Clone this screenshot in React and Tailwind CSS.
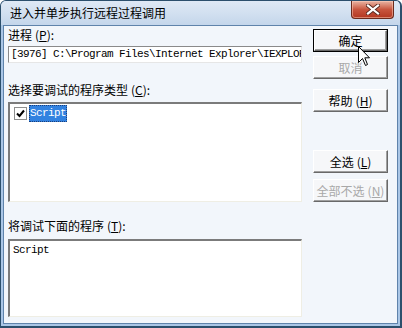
import clsx from "clsx"

const cjk = { fontFamily: '"Noto Sans CJK SC", "Liberation Sans", sans-serif' }
const mono = { fontFamily: '"Liberation Mono", "Noto Sans CJK SC", monospace' }

function Key({ k }) {
    return <span className="ml-[3px]">(<u>{k}</u>)</span>
}

function Btn({ children, primary, disabled, className }) {
    return (
        <div className={clsx("w-[75px] h-[23px]", primary && "border border-black", className)}>
            <div
                className={clsx(
                    "h-full flex items-center justify-center text-[12px] leading-none bg-[#f6f7f9]",
                    "border-t border-l border-t-white border-l-white border-r border-b border-r-[#696969] border-b-[#696969]",
                    "shadow-[inset_-1px_-1px_0_#a0a0a0]",
                    disabled ? "text-[#a8a8a8]" : "text-black"
                )}
            >
                {children}
            </div>
        </div>
    )
}

function CloseButton() {
    return (
        <div className="w-[43px] h-[18px] rounded-b-[4px] border border-t-0 border-[#6b2a1c] bg-gradient-to-b from-[#e8b4a4] via-[#c8553e] to-[#b3361f] flex items-center justify-center shadow-[inset_0_0_0_1px_rgba(255,210,190,0.5)]">
            <svg width="14" height="11" viewBox="0 0 14 11">
                <path d="M2 1.5 L12 9.5 M12 1.5 L2 9.5" stroke="#5a2a20" strokeWidth="4" strokeLinecap="square" />
                <path d="M2 1.5 L12 9.5 M12 1.5 L2 9.5" stroke="#ffffff" strokeWidth="2.2" strokeLinecap="square" />
            </svg>
        </div>
    )
}

function Cursor() {
    return (
        <svg className="absolute left-[357px] top-[45px]" width="13" height="21" viewBox="0 0 13 21">
            <path d="M0.5 0.5 L0.5 16.5 L4.5 12.5 L7.5 19.5 L9.5 18.5 L6.8 11.8 L11.5 11.8 Z" fill="#ffffff" stroke="#000000" strokeWidth="1" strokeLinejoin="miter" />
        </svg>
    )
}

export default function App() {
    return (
        <div className="w-[402px] h-[328px] relative flex flex-col bg-[#aac6e6] border border-[#2c4f6c] border-r-2 border-b-2 rounded-t-[6px] overflow-hidden" style={cjk}>
            {/* title bar */}
            <div className="h-[24px] flex justify-between pl-[9px] pr-[6px] bg-gradient-to-b from-[#dfe9f5] via-[#d2e0f0] to-[#c4d6eb]">
                <span className="mt-[5px] text-[12px] leading-[14px] text-black">进入并单步执行远程过程调用</span>
                <CloseButton />
            </div>

            {/* client area */}
            <div className="flex-1 mx-[2px] mb-[2px] border border-[#5f83ab] bg-[#f2f6fb] flex pl-[4px]">
                <div className="w-[294px] flex flex-col text-[12px] leading-[14px] text-black">
                    <div className="mt-[2px] h-[14px]">进程<Key k="P" />:</div>
                    <div className="mt-[4px] h-[17px] bg-white border border-[#8a8a8a] border-r-[#e6e6e6] border-b-[#e6e6e6] overflow-hidden whitespace-nowrap pl-[2px] text-[11px] leading-[15px] tracking-[-0.6px]" style={mono}>
                        [3976] C:\Program Files\Internet Explorer\IEXPLORE.EXE
                    </div>
                    <div className="mt-[20px] h-[14px]">选择要调试的程序类型<Key k="C" />:</div>
                    <div className="mt-[5px] h-[100px] bg-white border-t-2 border-l-2 border-[#7b7b7b] border-r border-b border-r-[#efeee4] border-b-[#efeee4] pl-[4px] pt-[1px]">
                        <div className="flex items-center gap-[2px]">
                            <div className="w-[13px] h-[13px] border border-[#8e8f8f] bg-white flex items-center justify-center">
                                <svg width="9" height="9" viewBox="0 0 9 9">
                                    <path d="M1 4.5 L3.5 7 L8 1.5" stroke="#000" strokeWidth="2" fill="none" />
                                </svg>
                            </div>
                            <div className="h-[17px] px-[1px] bg-[#3282e0] outline outline-1 outline-dotted outline-[#1c3f7a] -outline-offset-1 text-white text-[11px] leading-[17px] tracking-[-0.6px]" style={mono}>
                                Script
                            </div>
                        </div>
                    </div>
                    <div className="mt-[17px] h-[14px]">将调试下面的程序<Key k="T" />:</div>
                    <div className="mt-[6px] h-[78px] bg-white border-t-2 border-l-2 border-[#7b7b7b] border-r border-b border-r-[#efeee4] border-b-[#efeee4] pl-[3px] pt-[2px] text-[11px] leading-[15px] tracking-[-0.6px]" style={mono}>
                        Script
                    </div>
                </div>

                <div className="ml-[11px] flex flex-col">
                    <Btn primary className="mt-[3px]">确定</Btn>
                    <Btn disabled className="mt-[4px]">取消</Btn>
                    <Btn className="mt-[10px]">帮助<Key k="H" /></Btn>
                    <Btn className="mt-[38px]">全选<Key k="L" /></Btn>
                    <Btn disabled className="mt-[6px]">全部不选<Key k="N" /></Btn>
                </div>
            </div>

            <Cursor />
        </div>
    )
}
